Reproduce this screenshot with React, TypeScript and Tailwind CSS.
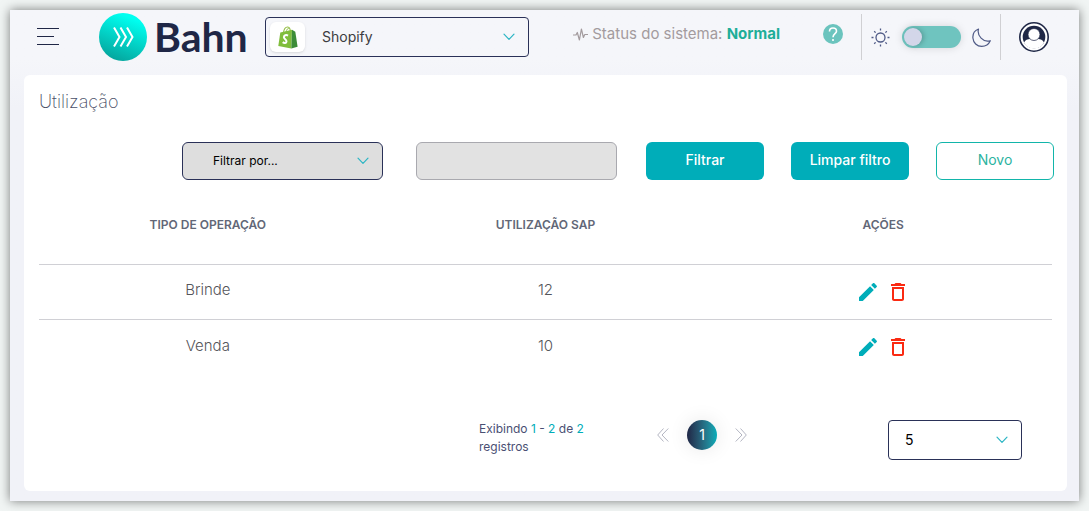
import React, { useState } from 'react';

interface Usage {
  id: number;
  operation: string;
  sap: string;
}

const usages: Usage[] = [
  { id: 1, operation: 'Brinde', sap: '12' },
  { id: 2, operation: 'Venda', sap: '10' },
];

function Chevron({ className }: { className: string }) {
  return (
    <svg className={`pointer-events-none absolute top-1/2 -translate-y-1/2 ${className}`} width="12" height="8" viewBox="0 0 12 8" fill="none" stroke="#2bb5c4" strokeWidth="1.2" strokeLinecap="round" strokeLinejoin="round" aria-hidden="true">
      <path d="M1 1.2 6 6.4 11 1.2" />
    </svg>
  );
}

function Logo() {
  return (
    <a href="#" className="flex items-center gap-[7px]" aria-label="Bahn">
      <svg width="48" height="48" viewBox="0 0 48 48" aria-hidden="true">
        <defs>
          <linearGradient id="logoFill" x1="0.7" y1="0" x2="0.3" y2="1">
            <stop offset="0.1" stopColor="#00fff0" />
            <stop offset="1" stopColor="#05a39b" />
          </linearGradient>
        </defs>
        <circle cx="24" cy="24" r="24" fill="url(#logoFill)" />
        <g fill="none" stroke="#fff" strokeWidth="2">
          <path d="M15 14.5 20.5 24 15 33.5" />
          <path d="M21.5 14.5 27 24 21.5 33.5" />
          <path d="M28 14.5 33.5 24 28 33.5" />
        </g>
      </svg>
      <span className="font-[Lato,sans-serif] text-[41px] leading-[48px] font-bold text-[#1f2746]">Bahn</span>
    </a>
  );
}

function ShopifyIcon() {
  return (
    <svg width="20" height="23" viewBox="0 0 20 23" aria-hidden="true">
      <path d="M5.5 6.5C6 3 8 .9 9.8 1c1.6.1 2.5 2 2.7 5" fill="none" stroke="#95bf47" strokeWidth="1.2" />
      <path d="M8 6.3C8.300 3.500 10 2 11.300 2.300" fill="none" stroke="#95bf47" strokeWidth="1" />
      <path d="M2.300 6.400 14 3.700 13.300 22.500.3 20z" fill="#80bd3c" />
      <path d="M14 3.700 17.300 5.800 19.600 20.800 13.300 22.500z" fill="#3c8c38" />
      <path d="M10 9.600C8.200 8.500 5.800 9.300 5.900 11.300c.1 1.900 2.700 2.100 2.600 4.100-.1 1.800-2.200 2-3.800.7" fill="none" stroke="#fff" strokeWidth="2" />
    </svg>
  );
}

function Header() {
  const [dark, setDark] = useState(false);

  return (
    <header className="flex h-[65px] items-start pr-[18px] pl-[13px]">
      <button className="mt-[17px] flex h-[19px] w-[22px] flex-col justify-between py-px" aria-label="Menu">
        <span className="h-px w-[22px] bg-[#1f2746]"></span>
        <span className="h-px w-[17px] bg-[#1f2746]"></span>
        <span className="h-px w-[22px] bg-[#1f2746]"></span>
      </button>
      <div className="mt-[3px] ml-10 w-[166px]">
        <Logo />
      </div>

      {/* Platform */}
      <div className="relative mt-[7px] w-[264px]">
        <select aria-label="Plataforma" className="h-10 w-full appearance-none rounded border border-[#2a3158] bg-transparent pl-14 text-sm text-[#3c3c40]">
          <option>Shopify</option>
        </select>
        <span className="pointer-events-none absolute top-[5px] left-[5px] flex h-[30px] w-[35px] items-center justify-center rounded-md bg-white shadow-sm">
          <ShopifyIcon />
        </span>
        <Chevron className="right-[14px]" />
      </div>

      <div className="mt-[14px] ml-auto flex h-5 items-center">
        <svg width="15" height="13" viewBox="0 0 15 13" fill="none" stroke="#a39b9e" strokeWidth="1.200" strokeLinejoin="round" aria-hidden="true">
          <path d="M0 7h3l1.300-2.500L6.400 12 8.400 1l2 8.500L11.800 6.500H15" />
        </svg>
        <p className="ml-1 text-[15px] leading-5 whitespace-nowrap text-[#a39b9e]">
          Status do sistema: <strong className="font-bold text-[#1eae98]">Normal</strong>
        </p>
        <button className="ml-[43px] flex h-5 w-5 items-center justify-center rounded-full bg-[#6bc4be]" aria-label="Ajuda">
          <svg width="10" height="15" viewBox="0 0 10 15" fill="none" stroke="#fff" strokeWidth="1.600" aria-hidden="true">
            <path d="M1.500 4.500C1.500 2.300 3 1 5 1s3.500 1.300 3.500 3.200C8.500 6.700 5 6.800 5 10.300" />
            <path d="M5 12v2" />
          </svg>
        </button>
      </div>

      {/* Theme */}
      <div className="mt-1 ml-[18px] flex h-[46px] w-[140px] items-center justify-between border-x border-[#d0d0d3] px-[9px]">
        <svg width="19" height="19" viewBox="0 0 19 19" fill="none" stroke="#4f5a86" strokeWidth="1.300" aria-hidden="true">
          <circle cx="9.500" cy="9.500" r="4.500" />
          <path d="M9.500.5v2M9.500 16.500v2M.5 9.500h2M16.500 9.500h2M3.200 3.200l1.400 1.400M14.400 14.400l1.400 1.400M3.200 15.800l1.400-1.400M14.400 4.600l1.400-1.400" />
        </svg>
        <input
          type="checkbox"
          role="switch"
          aria-label="Tema escuro"
          checked={dark}
          onChange={(e) => setDark(e.target.checked)}
          className="h-[22px] w-[59px] appearance-none rounded-full bg-[#6fc4bf] p-[2px] shadow-[0_0_8px_#00000022] before:block before:size-[18px] before:rounded-full before:bg-[#d3d6e9] before:shadow-[2px_0_5px_#00000033] checked:before:ml-auto"
        />
        <svg width="19" height="19" viewBox="0 0 19 19" fill="none" stroke="#4f5a86" strokeWidth="1.200" strokeLinejoin="round" aria-hidden="true">
          <path d="M6.500 1C2.500 2.500.6 6 .9 10c.4 4.800 4 8.300 8.800 8.300 3.900 0 7-2 8.600-5.600-3 1-6.600.2-9.200-2.500C6.500 7.500 5.600 4.300 6.500 1z" />
        </svg>
      </div>

      <button className="mt-3 ml-[18px]" aria-label="Minha conta">
        <svg width="30" height="30" viewBox="0 0 30 30">
          <circle cx="15" cy="15" r="14.200" fill="#fff" stroke="#1f2746" strokeWidth="1.600" />
          <circle cx="15" cy="15" r="11.300" fill="#1f2746" />
          <path d="M5 20.500C6.500 17.500 8.500 17 11 17h8c2.500 0 4.500.5 6 3.500C23 24.500 19.500 26.500 15 26.500S7 24.500 5 20.500z" fill="#fff" />
          <circle cx="15" cy="12.500" r="6" fill="#fff" stroke="#1f2746" strokeWidth=".7" />
        </svg>
      </button>
    </header>
  );
}

function Filters() {
  return (
    <form className="flex h-[38px] justify-end" onSubmit={(e) => e.preventDefault()}>
      <div className="relative w-[201px]">
        <select aria-label="Filtrar por" className="h-full w-full appearance-none rounded-md border border-[#2a3158] bg-[#dedede] pl-[30px] text-xs text-black">
          <option>Filtrar por...</option>
        </select>
        <Chevron className="right-[14px]" />
      </div>
      <input type="text" aria-label="Valor do filtro" className="ml-[33px] w-[201px] rounded-md border border-[#a9a9af] bg-[#e2e2e2] px-3 text-sm" />
      <button type="submit" className="ml-[29px] w-[118px] rounded-md bg-[#00adb9] pb-0.5 text-sm font-medium text-white">Filtrar</button>
      <button type="reset" className="ml-[27px] w-[118px] rounded-md bg-[#00adb9] pb-0.5 text-sm font-medium text-white">Limpar filtro</button>
      <button type="button" className="ml-[27px] w-[118px] rounded-md border border-[#12b5aa] bg-white pb-0.5 text-sm text-[#2bb39f]">Novo</button>
    </form>
  );
}

function UsageTable() {
  return (
    <table className="w-full table-fixed text-center">
      <thead>
        <tr className="h-[77px] text-xs text-[#626777]">
          <th className="pb-px font-semibold">TIPO DE OPERAÇÃO</th>
          <th className="pb-px font-semibold">UTILIZAÇÃO SAP</th>
          <th className="pb-px font-semibold">AÇÕES</th>
        </tr>
      </thead>
      <tbody>
        {usages.map((usage) => (
          <tr key={usage.id} className="h-[55px] border-t border-[#d0d0d5] text-[15px] font-light text-[#55555a]">
            <td className="pb-0.5">{usage.operation}</td>
            <td className="pb-0.5">{usage.sap}</td>
            <td>
              <div className="flex items-center justify-center gap-1.5">
                <button aria-label={`Editar ${usage.operation}`}>
                  <svg width="24" height="24" viewBox="0 0 24 24" fill="#00adb9">
                    <path d="M3 17.250V21h3.750L17.810 9.940l-3.750-3.750L3 17.250zM20.710 7.040c.39-.39.39-1.020 0-1.410l-2.340-2.340c-.39-.39-1.020-.39-1.410 0l-1.830 1.830 3.750 3.750 1.830-1.830z" />
                  </svg>
                </button>
                <button aria-label={`Excluir ${usage.operation}`}>
                  <svg width="24" height="24" viewBox="0 0 24 24" fill="#fa2a12">
                    <path d="M6 19c0 1.100.9 2 2 2h8c1.100 0 2-.9 2-2V7H6v12zM8 9h8v10H8V9zm7.500-5-1-1h-5l-1 1H5v2h14V4h-3.500z" />
                  </svg>
                </button>
              </div>
            </td>
          </tr>
        ))}
      </tbody>
    </table>
  );
}

function Pagination() {
  return (
    <footer className="mt-[46px] flex items-start justify-end pr-[30px]">
      <p className="w-[116px] text-xs leading-[18px] text-[#4a4f73]">
        Exibindo <span className="text-[#00adb9]">1</span> - <span className="text-[#00adb9]">2</span> de <span className="text-[#00adb9]">2</span> registros
      </p>
      <nav className="ml-[62px] flex items-center gap-[18px]" aria-label="Paginação">
        <button aria-label="Anterior">
          <svg width="12" height="14" viewBox="0 0 12 14" fill="none" stroke="#b4b6c2">
            <path d="M6.500 .5.7 7l5.800 6.500M11.300.5 5 7l6.300 6.500" />
          </svg>
        </button>
        <button className="size-[30px] rounded-full bg-linear-to-r from-[#1f2746] to-[#00adb9] text-sm text-white shadow-[0_0_20px_#00000018]" aria-current="page">1</button>
        <button aria-label="Próxima">
          <svg width="12" height="14" viewBox="0 0 12 14" fill="none" stroke="#b4b6c2">
            <path d="M5.500 .5 11.300 7l-5.800 6.500M.7.5 7 7 .7 13.500" />
          </svg>
        </button>
      </nav>
      <div className="relative ml-[141px] w-[134px]">
        <select aria-label="Registros por página" className="h-10 w-full appearance-none rounded border border-[#2a3158] bg-white pl-4 text-sm text-black">
          <option>5</option>
        </select>
        <Chevron className="right-[14px]" />
      </div>
    </footer>
  );
}

export default function App() {
  return (
    <div className="min-h-screen bg-[#f1f5f4] p-[10px] font-[Inter,sans-serif]">
      <div className="bg-linear-to-b from-[#f5f6fa] from-10% to-[#f1f2f8] to-20% pr-3 pb-[10px] pl-[14px] shadow-[0_0_10px_#00000080]">
        <Header />
        <main className="rounded-md bg-white pt-[15px] pr-[13px] pb-[31px] pl-[15px]">
          <h1 className="mb-7 text-lg leading-6 font-extralight text-[#4a4f68]">Utilização</h1>
          <Filters />
          <div className="mt-[7px] pr-0.5">
            <UsageTable />
            <Pagination />
          </div>
        </main>
      </div>
    </div>
  );
}
